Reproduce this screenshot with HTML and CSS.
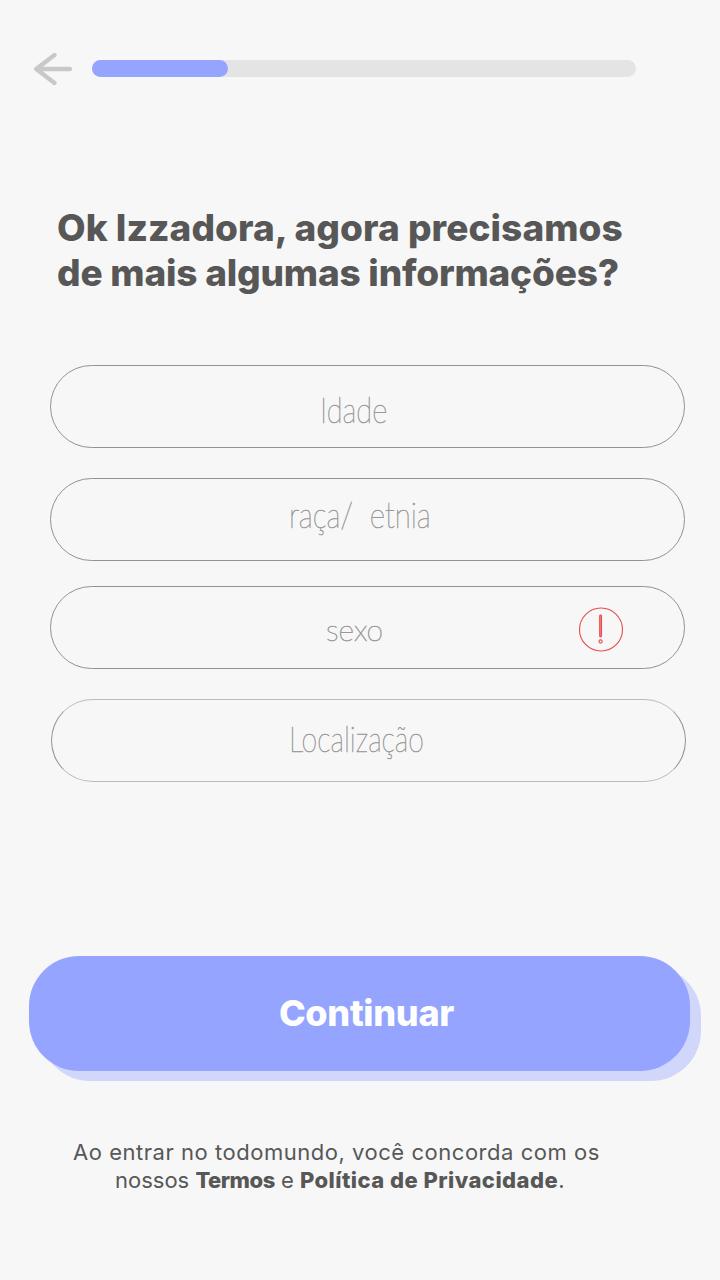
FILE: index.html
```
<!DOCTYPE html>
<html lang="pt-BR">
<head>
    <meta charset="UTF-8">
    <meta name="viewport" content="width=device-width, initial-scale=1.0">
    <title>todomundo - Cadastro</title>
    <link rel="stylesheet" href="styles.css">
</head>
<body>
    <header class="topo">
        <a class="voltar" href="#" aria-label="Voltar">
            <svg width="40" height="34" viewBox="0 0 40 34">
                <path d="M21.5 3 L3.2 17 L21.5 31 M3.2 17 H37" />
            </svg>
        </a>
        <div class="progresso">
            <div class="progresso-barra"></div>
        </div>
    </header>

    <main>
        <h1>
            <span class="linha titulo-1">Ok Izzadora, agora precisamos</span>
            <span class="linha titulo-2">de mais algumas informações?</span>
        </h1>

        <form class="formulario">
            <div class="campo"><label class="idade">Idade</label></div>
            <div class="campo"><label class="etnia">raça/&nbsp; etnia</label></div>
            <div class="campo campo-sexo">
                <label class="sexo">sexo</label>
                <!-- Aviso de campo obrigatório -->
                <svg class="aviso" width="46" height="46" viewBox="0 0 46 46">
                    <circle cx="23" cy="22.5" r="21.5" />
                    <rect class="aviso-traco" x="21.7" y="8" width="1.8" height="22" rx="0.9" />
                    <circle cx="22.6" cy="34.5" r="1.6" />
                </svg>
            </div>
            <div class="campo campo-local"><label class="local">Localização</label></div>

            <button type="button" class="continuar"><span>Continuar</span></button>
        </form>
    </main>

    <footer>
        <span class="linha termos-1">Ao entrar no todomundo, você concorda com os</span>
        <span class="linha termos-2">nossos <b class="termos-link">Termos</b> e <b class="politica-link">Política de Privacidade</b>.</span>
    </footer>
</body>
</html>
```

FILE: styles.css
```
* {
    box-sizing: border-box;
}
body {
    margin: 0;
    height: 1280px;
    background-color: #f7f7f7;
    color: #575757;
    font-family: Inter, sans-serif;
    overflow: hidden;
}
.linha {
    display: block;
    width: max-content;
    white-space: nowrap;
}
.topo {
    display: flex;
    align-items: center;
    padding: 52px 0 0 33px;
    height: 86px;
}
.voltar {
    width: 59px;
    height: 34px;
}
.voltar path {
    fill: none;
    stroke: #c8c8c8;
    stroke-width: 4.3;
    stroke-linecap: round;
    stroke-linejoin: round;
}
.progresso {
    width: 544px;
    height: 17px;
    margin-bottom: 1px;
    border-radius: 9px;
    background-color: #e4e4e4;
}
.progresso-barra {
    width: 136px;
    height: 17px;
    border-radius: 9px;
    background-color: #95a5ff;
}
h1 {
    margin: 0;
    padding: 119px 0 0 57px;
    height: 279px;
    font-size: 37px;
    font-weight: 800;
    line-height: 45px;
}
.titulo-1 {
    letter-spacing: 0.07px;
}
.titulo-2 {
    letter-spacing: -0.2px;
}
.formulario {
    display: flex;
    flex-direction: column;
}
.campo {
    display: flex;
    align-items: center;
    width: 635px;
    height: 83px;
    margin: 0 0 30px 50px;
    border: 1px solid #929292;
    border-radius: 42px;
    color: #8f8f8f;
}
.campo label {
    width: max-content;
    font-family: Lato, sans-serif;
    font-size: 36px;
    font-weight: 100;
    line-height: 40px;
    white-space: nowrap;
    transform-origin: left center;
    -webkit-text-stroke: 0.7px #999;
}
.campo .idade {
    margin: 5px 0 0 269px;
    transform: scaleX(0.81);
}
.campo .etnia {
    margin: 0 0 12px 238px;
    transform: scaleX(0.82);
}
.campo .sexo {
    margin: 2px 0 0 275px;
    font-size: 30px;
}
.campo .local {
    margin: 0 0 5px 237px;
    transform: scaleX(0.79);
}
.campo:nth-child(2) {
    margin-bottom: 25px;
}
.campo-sexo {
    position: relative;
}
.campo-local {
    margin-left: 51px;
    border-top-color: #bbb;
    border-bottom-color: #bbb;
}
.aviso {
    position: absolute;
    top: 20px;
    right: 60px;
    fill: none;
    stroke: #e84b4b;
    stroke-width: 1.1;
}
.aviso-traco {
    fill: #f08a8a;
}
.continuar {
    width: 661px;
    height: 115px;
    margin: 144px 0 0 29px;
    padding: 0;
    border: none;
    border-radius: 50px;
    background-color: #95a5ff;
    box-shadow: 11px 10px 0 #d0d7fb;
    color: #fff;
    font-family: Inter, sans-serif;
    font-size: 36px;
    font-weight: 800;
    letter-spacing: -0.3px;
    cursor: pointer;
}
.continuar span {
    display: block;
    margin: 0 0 2px 14px;
}
footer {
    padding-top: 67px;
    font-size: 22px;
    line-height: 28px;
}
footer b {
    font-weight: 800;
}
.termos-1 {
    margin-left: 73px;
    letter-spacing: 0.53px;
}
.termos-2 {
    margin-left: 115px;
}
.termos-link {
    letter-spacing: -0.5px;
}
.politica-link {
    letter-spacing: 0.46px;
}
```
